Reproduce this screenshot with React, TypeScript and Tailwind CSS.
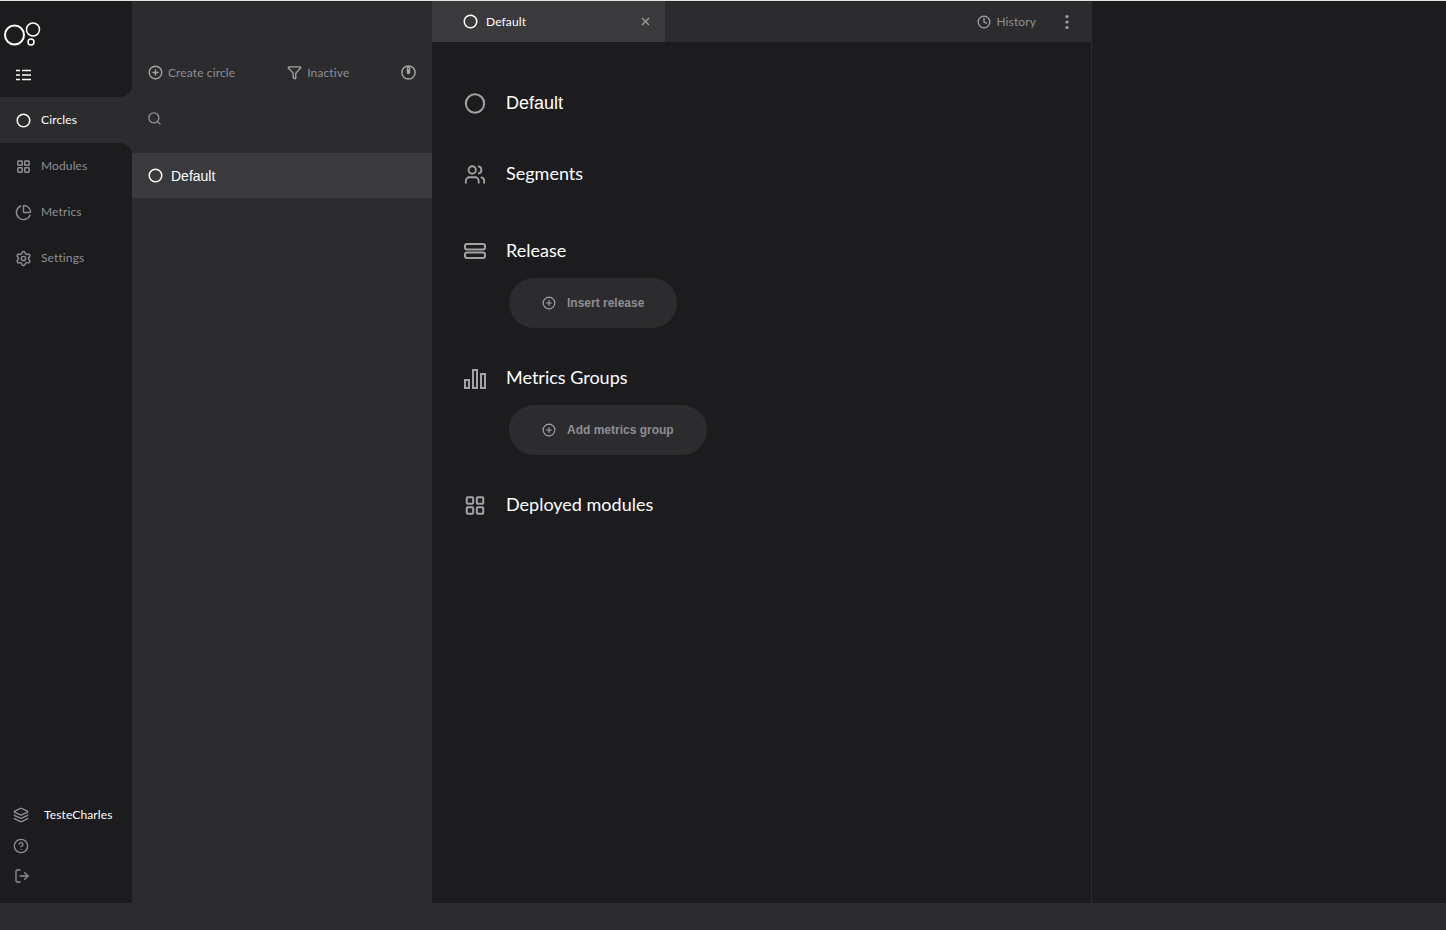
import { Circle, CirclePlus, Clock, Filter, HelpCircle, Layers, LayoutGrid, LogOut, PieChart, Search, Settings, Users, X } from 'lucide-react';
import type { ReactNode } from 'react';

const lato = "font-['Lato',sans-serif] tracking-[0.12px]";
const arial = "font-['Liberation_Sans',sans-serif] tracking-normal";

function Logo() {
  return (
    <svg width="38" height="28" viewBox="0 0 38 28" fill="none" stroke="#fff">
      <circle cx="10.5" cy="15" r="9.5" strokeWidth="2" />
      <circle cx="29" cy="9.5" r="6.5" strokeWidth="1.5" />
      <circle cx="27" cy="22" r="3" strokeWidth="1.5" />
    </svg>
  );
}

function MenuIcon() {
  return (
    <svg width="15" height="12" viewBox="0 0 15 12" fill="none" stroke="#fff" strokeWidth="1.6">
      <path d="M0 1.5h4M6 1.5h9M0 6h4M6 6h9M0 10.5h4M6 10.5h9" />
    </svg>
  );
}

function ReleaseIcon() {
  return (
    <svg width="22" height="16" viewBox="0 0 22 16" fill="none" stroke="#a3a3a6" strokeWidth="2">
      <rect x="1" y="1" width="20" height="5.5" rx="2" />
      <rect x="1" y="9.5" width="20" height="5.5" rx="2" />
    </svg>
  );
}

function BarsIcon() {
  return (
    <svg width="22" height="20" viewBox="0 0 22 20" fill="none" stroke="#a3a3a6" strokeWidth="2" className="mt-[2px]">
      <rect x="1" y="11" width="4" height="8" />
      <rect x="9" y="1" width="4" height="18" />
      <rect x="17" y="5" width="4" height="14" />
    </svg>
  );
}

function PowerIcon() {
  return (
    <svg width="15" height="15" viewBox="0 0 15 15" fill="none" className="-mt-[2px]">
      <circle cx="7.5" cy="7.5" r="6.6" stroke="#a3a3a6" strokeWidth="1.5" />
      <path d="M7.5 3v4.5" stroke="#a3a3a6" strokeWidth="3.4" strokeLinecap="round" />
      <circle cx="7.5" cy="3.6" r="0.6" fill="#2c2c2e" />
    </svg>
  );
}

function NavItem({ icon, label, active }: { icon: ReactNode; label: string; active?: boolean }) {
  return (
    <div className={`flex h-[46px] items-center gap-[10px] pl-4 text-[12px] ${lato} ${active ? 'text-white' : 'text-[#8e8e93]'}`}>
      {icon}
      {label}
    </div>
  );
}

function Section({ icon, title, className, children }: { icon: ReactNode; title: string; className: string; children?: ReactNode }) {
  return (
    <div className={className}>
      <div className="flex h-6 items-center">
        <div className="mt-[2px] ml-[32px] flex w-[22px] justify-center">{icon}</div>
        <span className="ml-[20px] text-[18px] leading-6 tracking-normal text-white">{title}</span>
      </div>
      {children}
    </div>
  );
}

function AddButton({ label, width }: { label: string; width: string }) {
  return (
    <div className={`mt-[16px] ml-[77px] flex h-[50px] items-center gap-[11px] rounded-full bg-[#2c2c2e] pl-[33px] text-[12px] font-bold text-[#8e8e93] ${arial} ${width}`}>
      <CirclePlus size={14} strokeWidth={2} className="text-[#a3a3a6]" />
      {label}
    </div>
  );
}

export default function App() {
  return (
    <div className="flex h-[930px] flex-col overflow-hidden bg-[#2c2c2e]">
      <div className="h-px bg-[#e4e4e4]" />
      <div className="flex h-[902px]">
        {/* sidebar */}
        <div className="flex w-[132px] flex-col">
          <div className="h-[96px] rounded-br-xl bg-[#1c1c1e] pt-[19px] pl-[4px]">
            <Logo />
            <div className="mt-[21px] ml-[12px]">
              <MenuIcon />
            </div>
          </div>
          <NavItem active label="Circles" icon={<Circle size={15} strokeWidth={2.4} className="text-white" />} />
          <div className="flex flex-1 flex-col rounded-tr-xl bg-[#1c1c1e]">
            <NavItem label="Modules" icon={<LayoutGrid size={15} strokeWidth={2.4} className="text-[#8e8e93]" />} />
            <NavItem label="Metrics" icon={<PieChart size={17} strokeWidth={2} className="-mx-px text-[#8e8e93]" />} />
            <NavItem label="Settings" icon={<Settings size={17} strokeWidth={2} className="-mx-px text-[#8e8e93]" />} />
            <div className="mt-auto flex flex-col pb-[19px] pl-[13px]">
              <div className="flex h-[16px] items-center">
                <Layers size={16} strokeWidth={2} className="text-[#8e8e93]" />
                <span className={`ml-[15px] text-[12px] text-white ${lato}`}>TesteCharles</span>
              </div>
              <HelpCircle size={16} strokeWidth={2} className="mt-[15px] text-[#8e8e93]" />
              <LogOut size={16} strokeWidth={2} className="mt-[14px] ml-px text-[#8e8e93]" />
            </div>
          </div>
        </div>

        {/* circles list */}
        <div className="flex w-[300px] flex-col">
          <div className={`mt-[60px] flex h-[24px] items-center px-4 text-[12px] text-[#8e8e93] ${lato}`}>
            <CirclePlus size={15} strokeWidth={2.2} className="-mt-[2px] text-[#a3a3a6]" />
            <span className="ml-[5px]">Create circle</span>
            <Filter size={15} strokeWidth={2.2} className="-mt-[2px] ml-[52px] text-[#a3a3a6]" />
            <span className="ml-[5px]">Inactive</span>
            <div className="ml-auto">
              <PowerIcon />
            </div>
          </div>
          <div className="mt-[22px] flex h-[24px] items-center pl-[15px]">
            <Search size={15} strokeWidth={2.2} className="-mt-[2px] text-[#8e8e93]" />
          </div>
          <div className={`mt-[22px] flex h-[45px] items-center gap-[8px] bg-[#3a3a3c] pl-4 text-[14px] text-white ${arial}`}>
            <Circle size={15} strokeWidth={2.4} />
            <span className="mt-[2px]">Default</span>
          </div>
        </div>

        {/* circle detail */}
        <div className="flex w-[660px] flex-col border-r border-[#2c2c2e] bg-[#1c1c1e]">
          <div className="flex h-[41px] bg-[#2c2c2e]">
            <div className={`flex w-[233px] items-center bg-[#3a3a3c] pl-[31px] text-[12px] text-white ${lato}`}>
              <Circle size={15} strokeWidth={2.4} />
              <span className="ml-2">Default</span>
              <X size={13} strokeWidth={2} className="mr-[13px] ml-auto text-[#a3a3a6]" />
            </div>
            <div className={`ml-auto flex items-center pr-[22px] text-[12px] text-[#8e8e93] ${lato}`}>
              <Clock size={14} strokeWidth={2.2} className="text-[#a3a3a6]" />
              <span className="ml-[5px]">History</span>
              <svg width="4" height="16" viewBox="0 0 4 16" fill="#a3a3a6" className="ml-[29px]">
                <circle cx="2" cy="2.5" r="1.6" />
                <circle cx="2" cy="8" r="1.6" />
                <circle cx="2" cy="13.5" r="1.6" />
              </svg>
            </div>
          </div>
          <div className={`text-white ${lato}`}>
            <div className={arial}>
              <Section className="mt-[49px]" title="Default" icon={<Circle size={23} strokeWidth={2.2} className="-mt-[2px] text-[#a3a3a6]" />} />
            </div>
            <Section className="mt-[46px]" title="Segments" icon={<Users size={23} strokeWidth={2} className="text-[#a3a3a6]" />} />
            <Section className="mt-[53px]" title="Release" icon={<ReleaseIcon />}>
              <AddButton label="Insert release" width="w-[168px]" />
            </Section>
            <Section className="mt-[37px]" title="Metrics Groups" icon={<BarsIcon />}>
              <AddButton label="Add metrics group" width="w-[198px]" />
            </Section>
            <Section className="mt-[37px]" title="Deployed modules" icon={<LayoutGrid size={23} strokeWidth={2.2} className="text-[#a3a3a6]" />} />
          </div>
        </div>

        <div className="flex-1 bg-[#1c1c1e]" />
      </div>
    </div>
  );
}
